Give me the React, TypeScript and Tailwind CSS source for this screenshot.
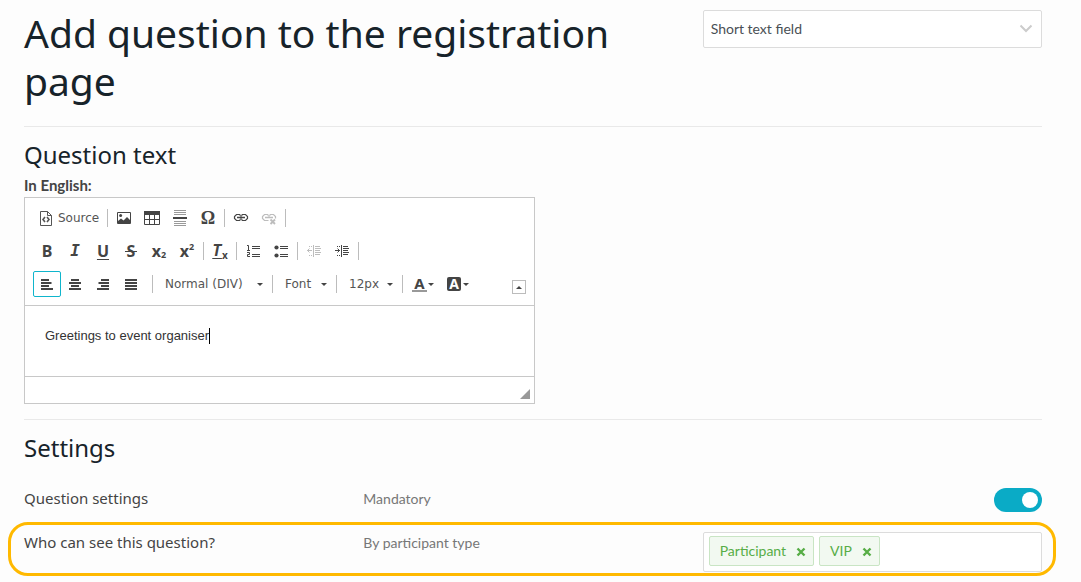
import React, { useState } from "react";

type IconName = keyof typeof icons;

const icons = {
  source: (
    <>
      <path d="M2.5 1.5h7l4 4v10h-11z" fill="none" stroke="currentColor" />
      <path d="M9.5 1.5v4h4" fill="none" stroke="currentColor" />
      <path d="M7 7 5 9.5 7 12M9 7l2 2.5L9 12" fill="none" stroke="currentColor" strokeWidth="1.6" />
    </>
  ),
  image: (
    <>
      <path d="M1.5 2.5h13v11h-13z" fill="none" stroke="currentColor" />
      <path d="M2 13v-2l3-2.5 2.5 2L11 7l3 3v3z" fill="currentColor" />
      <circle cx="4.6" cy="5.6" r="1.5" fill="currentColor" />
    </>
  ),
  table: (
    <>
      <path d="M0 1h16v4H0z" fill="currentColor" />
      <path d="M.5 4.5v10h15v-10M5.5 4.5v10M10.5 4.5v10M0 9.5h16" fill="none" stroke="currentColor" />
    </>
  ),
  rule: (
    <>
      <path d="M2 .5h12M2 2.5h12M2 4.5h12M2 11.5h12M2 13.5h12M2 15.5h12" stroke="#9a9a9a" />
      <path d="M1 7h14v2H1z" fill="currentColor" />
    </>
  ),
  link: (
    <g fill="none" stroke="currentColor">
      <path d="M7.5 5.5l-1-1h-3l-2 2v2l2 2h3l1-1" strokeWidth="1.2" />
      <path d="M8.5 5.5l1-1h3l2 2v2l-2 2h-3l-1-1" strokeWidth="1.2" />
      <path d="M8 5.500v1M8 8.500v1M4 7.500h8" strokeWidth="1.6" />
    </g>
  ),
  unlink: (
    <g fill="none" stroke="currentColor">
      <path d="M7.5 5.5l-1-1h-3l-2 2v2l2 2h4" strokeWidth="1.2" />
      <path d="M8.5 5.5l1-1h3l2 2v2" strokeWidth="1.2" />
      <path d="M8 5.500v1M4 7.500h8" strokeWidth="1.6" />
      <path d="m9.5 9.500 4.500 4.500m0-4.500L9.500 14" strokeWidth="1.8" />
    </g>
  ),
  ol: (
    <>
      <path d="M7 3.5h8M7 5.5h8M7 11.5h8M7 13.5h8" stroke="currentColor" />
      <path d="M2 2.5h1.500V7M2 7.5h3M2 9.5h2.500v2h-2v2H5" fill="none" stroke="currentColor" />
    </>
  ),
  ul: (
    <>
      <path d="M7 3.5h8M7 5.5h8M7 11.5h8M7 13.5h8" stroke="currentColor" />
      <circle cx="3.5" cy="4.5" r="2.1" fill="currentColor" />
      <circle cx="3.5" cy="12.5" r="2.1" fill="currentColor" />
    </>
  ),
  outdent: (
    <>
      <path d="M7.5 2v12M9 3.5h5M9 5.5h6M9 7.5h5M9 9.5h6M9 11.5h5" stroke="currentColor" />
      <path d="M3 3.5h1M5 3.5h1M3 12.5h1M5 12.5h1M1 7.5h5M3.5 5.5l-2 2 2 2" fill="none" stroke="currentColor" />
    </>
  ),
  indent: (
    <>
      <path d="M7.5 2v12M9 3.5h5M9 5.5h6M9 7.5h5M9 9.5h6M9 11.5h5" stroke="currentColor" />
      <path d="M3 3.5h1M5 3.5h1M3 12.5h1M5 12.5h1M1 7.5h5M3.5 5.5l2 2-2 2" fill="none" stroke="currentColor" />
    </>
  ),
  alignLeft: <path d="M2 4h8M2 7h10.5M2 10h8M2 13h12" stroke="currentColor" strokeWidth="2" />,
  alignCenter: <path d="M4 4h8M2 7h12M4 10h8M2 13h12" stroke="currentColor" strokeWidth="2" />,
  alignRight: <path d="M6 4h8M3.5 7H14M6 10h8M2 13h12" stroke="currentColor" strokeWidth="2" />,
  justify: <path d="M2 4h12M2 7h12M2 10h12M2 13h12" stroke="currentColor" strokeWidth="2" />,
};

const Icon = ({ name }: { name: IconName }) => (
  <svg viewBox="0 0 16 16" className="size-4 shrink-0" aria-hidden="true">
    {icons[name]}
  </svg>
);

const Caret = ({ className = "" }: { className?: string }) => (
  <svg viewBox="0 0 6 3" className={`h-[3px] w-1.5 shrink-0 ${className}`} aria-hidden="true">
    <path d="M0 0h6L3 3z" fill="#444" />
  </svg>
);

const Separator = () => <span className="mx-0.5 h-[18px] w-px bg-[#bcbcbc]" />;

type ToolButtonProps = {
  label: string;
  active?: boolean;
  disabled?: boolean;
  children: React.ReactNode;
};

const ToolButton = ({ label, active, disabled, children }: ToolButtonProps) => (
  <button
    type="button"
    aria-label={label}
    aria-pressed={active}
    disabled={disabled}
    className={`flex h-[26px] w-7 items-center justify-center rounded-xs border disabled:opacity-35 ${
      active ? "border-[#0fb5cc]" : "border-transparent"
    }`}
  >
    {children}
  </button>
);

const Combo = ({ label, value, className }: { label: string; value: string; className: string }) => (
  <div className={`relative flex items-center ${className}`}>
    <select
      aria-label={label}
      className="h-[26px] w-full appearance-none bg-transparent pl-3 font-['DejaVu_Sans',sans-serif] text-xs text-[#555]"
    >
      <option>{value}</option>
    </select>
    <Caret className="pointer-events-none absolute right-[9px]" />
  </div>
);

const Toolbar = () => (
  <div className="flex flex-col gap-[7px] border-b border-[#c8c8c8] px-2 pt-[7px] pb-2 text-[#444]">
    <div className="flex items-center">
      <button
        type="button"
        className="flex h-[26px] w-[72px] items-center gap-1 pl-[5px] font-['DejaVu_Sans',sans-serif] text-xs text-[#555]"
      >
        <Icon name="source" />
        Source
      </button>
      <Separator />
      <ToolButton label="Image"><Icon name="image" /></ToolButton>
      <ToolButton label="Table"><Icon name="table" /></ToolButton>
      <ToolButton label="Insert horizontal line"><Icon name="rule" /></ToolButton>
      <ToolButton label="Insert special character">
        <span className="font-['Liberation_Serif',serif] text-lg leading-4 font-bold">Ω</span>
      </ToolButton>
      <Separator />
      <ToolButton label="Link"><Icon name="link" /></ToolButton>
      <ToolButton label="Unlink" disabled><Icon name="unlink" /></ToolButton>
      <Separator />
    </div>

    <div className="flex items-center font-['Noto_Sans',sans-serif] text-base leading-4 font-bold">
      <ToolButton label="Bold">B</ToolButton>
      <ToolButton label="Italic">
        <span className="font-['DejaVu_Sans_Mono',monospace] italic">I</span>
      </ToolButton>
      <ToolButton label="Underline"><span className="underline underline-offset-2">U</span></ToolButton>
      <ToolButton label="Strikethrough">
        <span className="whitespace-pre line-through">&#8202;S&#8202;</span>
      </ToolButton>
      <ToolButton label="Subscript">
        <span>x</span>
        <span className="self-end text-[9px]">2</span>
      </ToolButton>
      <ToolButton label="Superscript">
        <span>x</span>
        <span className="self-start text-[9px]">2</span>
      </ToolButton>
      <Separator />
      <ToolButton label="Remove format">
        <span className="font-['DejaVu_Sans_Mono',monospace] italic underline underline-offset-2">T</span>
        <span className="self-end text-[10px]">x</span>
      </ToolButton>
      <Separator />
      <ToolButton label="Numbered list"><Icon name="ol" /></ToolButton>
      <ToolButton label="Bulleted list"><Icon name="ul" /></ToolButton>
      <Separator />
      <ToolButton label="Decrease indent" disabled><Icon name="outdent" /></ToolButton>
      <ToolButton label="Increase indent"><Icon name="indent" /></ToolButton>
      <Separator />
    </div>

    <div className="flex items-center">
      <ToolButton label="Align left" active><Icon name="alignLeft" /></ToolButton>
      <ToolButton label="Center"><Icon name="alignCenter" /></ToolButton>
      <ToolButton label="Align right"><Icon name="alignRight" /></ToolButton>
      <ToolButton label="Justify"><Icon name="justify" /></ToolButton>
      <span className="ml-[7px] h-[18px] w-px bg-[#bcbcbc]" />
      <Combo label="Paragraph format" value="Normal (DIV)" className="w-[119px]" />
      <span className="h-[18px] w-px bg-[#bcbcbc]" />
      <Combo label="Font name" value="Font" className="w-[63px]" />
      <span className="h-[18px] w-px bg-[#bcbcbc]" />
      <Combo label="Font size" value="12px" className="w-[65px]" />
      <span className="h-[18px] w-px bg-[#bcbcbc]" />
      <button
        type="button"
        aria-label="Text color"
        className="ml-[9px] flex h-[26px] w-7 items-center gap-px font-['Noto_Sans',sans-serif] text-[15px] leading-[14px] font-bold"
      >
        <span className="w-[15px] border-b-2 border-[#999] text-center">A</span>
        <Caret />
      </button>
      <button
        type="button"
        aria-label="Background color"
        className="ml-[7px] flex h-[26px] w-7 items-center gap-0.5 font-['Noto_Sans',sans-serif] text-sm leading-[14px] font-bold"
      >
        <span className="w-3.5 rounded-xs bg-[#444] text-center text-white">A</span>
        <Caret />
      </button>
      <button
        type="button"
        aria-label="Collapse toolbar"
        className="mb-[3px] ml-auto flex size-3.5 items-center justify-center self-end border border-[#bcbcbc]"
      >
        <Caret className="rotate-180" />
      </button>
    </div>
  </div>
);

const Editor = () => (
  <div className="mt-0.5 max-w-[511px] border border-[#c8c8c8] bg-white">
    <Toolbar />
    <div className="flex h-[70px] items-start px-5 pt-5">
      <textarea
        id="question-text"
        rows={1}
        defaultValue="Greetings to event organiser"
        className="field-sizing-content resize-none font-['Liberation_Sans',Arial,sans-serif] text-[13px] leading-5 text-[#333] outline-none"
      />
      <span className="mt-0.5 h-4 w-px bg-black" />
    </div>
    <div className="flex h-[27px] items-end justify-end border-t border-[#c8c8c8] p-1">
      <svg viewBox="0 0 10 10" className="size-2.5" aria-hidden="true">
        <path d="M10 0v10H0z" fill="#999" />
      </svg>
    </div>
  </div>
);

const Tag = ({ label, onRemove }: { label: string; onRemove: () => void }) => (
  <span className="flex h-[30px] items-center gap-2.5 rounded-xs border border-[#c9e5c4] bg-[#f2f9f1] pr-[7px] pl-2.5 text-[#57ad46]">
    {label}
    <button type="button" aria-label={`Remove ${label}`} onClick={onRemove}>
      <svg viewBox="0 0 10 10" className="mt-0.5 size-2.5" aria-hidden="true">
        <path d="m1.5 1.5 7 7m0-7-7 7" stroke="currentColor" strokeWidth="2.4" />
      </svg>
    </button>
  </span>
);

export default function App() {
  const [tags, setTags] = useState(["Participant", "VIP"]);

  return (
    <main className="min-h-screen bg-[#fdfdfd] pt-2.5 pr-[39px] pb-1.5 pl-6 font-[Lato,sans-serif] text-sm leading-[22px] text-[#777]">
      <header className="grid grid-cols-3 border-b border-[#e9e9e9] pb-[21px]">
        <h1 className="col-span-2 -mt-px pr-5 font-['Noto_Sans',sans-serif] text-[39px] leading-12 text-[#17232a]">
          Add question to the registration page
        </h1>
        <div className="relative self-start">
          <select
            aria-label="Question type"
            className="h-[38px] w-full appearance-none rounded-xs border border-[#dcdcdc] bg-white px-[7px] text-[#4a4f55]"
          >
            <option>Short text field</option>
          </select>
          <svg viewBox="0 0 14 9" className="pointer-events-none absolute top-3.5 right-[9px] h-[9px] w-3.5" aria-hidden="true">
            <path d="m1.5 1.5 5.5 5.5 5.5-5.5" fill="none" stroke="#ccc" strokeWidth="2" />
          </svg>
        </div>
      </header>

      <section className="border-b border-[#e9e9e9] pt-3 pb-[15px]">
        <h2 className="font-['Noto_Sans',sans-serif] text-2xl leading-8 text-[#17232a]">Question text</h2>
        <label htmlFor="question-text" className="mt-1 block text-[15px] leading-5 font-bold text-[#444]">
          In English:
        </label>
        <Editor />
      </section>

      <section className="pt-3">
        <h2 className="font-['Noto_Sans',sans-serif] text-2xl leading-8 text-[#17232a]">Settings</h2>

        <div className="mt-6 grid grid-cols-3">
          <span className="font-['Noto_Sans',sans-serif] text-[15px] leading-5 text-[#444]">Question settings</span>
          <label htmlFor="mandatory">Mandatory</label>
          <input
            id="mandatory"
            type="checkbox"
            role="switch"
            defaultChecked
            className="flex h-6 w-12 appearance-none items-center justify-self-end rounded-full bg-[#ccc] px-1 before:size-4 before:rounded-full before:bg-white checked:justify-end checked:bg-[#0aabc6]"
          />
        </div>

        {/* Highlighted row */}
        <div className="mt-2.5 -mr-3.5 -ml-4 grid grid-cols-3 rounded-[20px] border-3 border-[#ffb900] pt-[7px] pr-[11px] pb-px pl-[13px]">
          <span className="font-['Noto_Sans',sans-serif] text-[15px] leading-5 text-[#444]">
            Who can see this question?
          </span>
          <label htmlFor="participant-type">By participant type</label>
          <div className="flex h-10 items-start gap-[5px] rounded-xs border border-[#dcdcdc] bg-white px-[5px] pt-[3px]">
            {tags.map((tag) => (
              <Tag key={tag} label={tag} onRemove={() => setTags(tags.filter((t) => t !== tag))} />
            ))}
            <input id="participant-type" type="text" className="h-[30px] min-w-0 flex-1 outline-none" />
          </div>
        </div>
      </section>
    </main>
  );
}
